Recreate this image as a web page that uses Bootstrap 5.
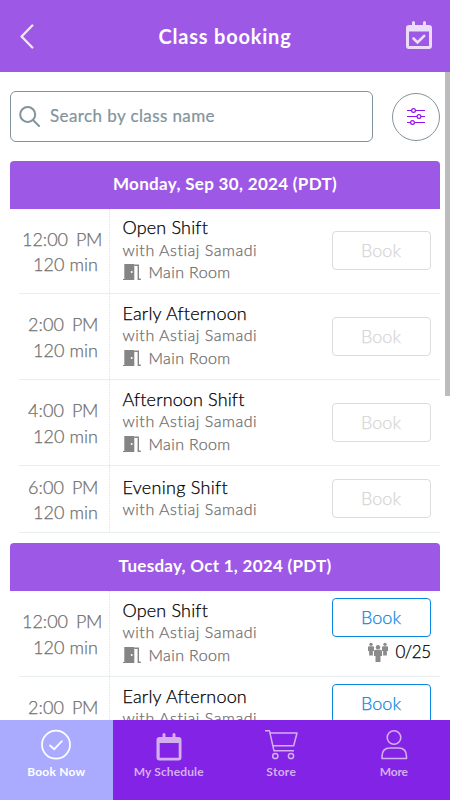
<!DOCTYPE html>
<html lang="en">
<head>
<meta charset="utf-8">
<meta name="viewport" content="width=device-width, initial-scale=1">
<title>Class booking</title>
<link href="https://cdn.jsdelivr.net/npm/bootstrap@5.3.0/dist/css/bootstrap.min.css" rel="stylesheet">
<style>
body{font-family:Lato,"Open Sans",sans-serif;height:800px;background:#fff;color:#111}
.app-head{height:72px;background:#9d59e6;color:#fff;padding:0 18px 0 20px}
.app-title{font-size:20px;font-weight:700;line-height:24px;margin-left:10px}
.page-body{padding:19px 10px 0}
.search-row{margin-bottom:19px}
.search-box{width:363px;height:51px;border:1px solid #82939c;border-radius:6px;padding-left:8px;color:#82939c}
.search-box input{border:0;outline:0;font-size:17px;letter-spacing:.4px;padding:0 0 1px;width:300px;margin-left:10px;line-height:22px;background:none}
.search-box input::placeholder{color:#82939c;opacity:1;-webkit-text-stroke:.2px #82939c}
.filter-btn{width:48px;height:48px;border:1px solid #82939c;border-radius:50%;background:#fff}
.day{margin-bottom:10.5px}
.day-head{height:47.5px;background:#9d59e6;color:#fff;border-radius:4px 4px 0 0;font-size:17px;font-weight:700;padding-bottom:2px}
.slot{height:86px;margin-left:9px;border-bottom:1px solid #e9eef0;-webkit-text-stroke:.25px currentColor}
.slot-first{height:85px}
.slot-short{height:67px}
.slot-time{width:91px;border-right:1px dotted #dfe3e5;color:#707070;font-size:18px;font-weight:300;line-height:25.5px;padding-top:3px}
.slot-time .time-line{padding-right:11px}
.slot-time .time-line.wide{padding-right:7px}
.slot-info{padding:0 0 1px 12.5px;line-height:22.4px;font-weight:300}
.slot-name{font-size:18px;color:#000}
.slot-sub{font-size:16px;color:#6c6c6c}
.slot-action{padding-right:9.500px}
.slot-action.open{padding-top:7px}
.btn-book{width:99px;height:39px;font-size:18px;font-weight:300;border-radius:4px;padding:0;color:#0b87e3;border:1px solid #0b87e3;background:#fff}
.btn-book:disabled{color:#d6d6d6;border-color:#dcdcdc;opacity:1}
.seat-count{font-size:17px;line-height:24px;color:#000;margin-top:3px;font-weight:300}
.scroll-thumb{width:5px;height:324px;top:72px;right:0;background:#bcbcbc}
.tab-bar{height:80px;background:#8323e6}
.tab-item{width:112.5px;color:#d3afee;font-size:12px;font-weight:700;text-decoration:none;padding-top:8px;line-height:16px}
.tab-item.selected{background:#aaabff;color:#fff}
.tab-item svg{height:34px;width:36px;margin-bottom:2px}
</style>
<script src="https://cdn.jsdelivr.net/npm/bootstrap@5.3.0/dist/js/bootstrap.bundle.min.js"></script>
</head>
<body class="overflow-hidden">
<svg class="d-none">
<symbol id="door" viewBox="0 0 18 16"><path d="M1.300 0H11.300V16H0V15h1.300z" fill="#858585"/><path d="M11.300 1.200H15.300V15.300H17.800" fill="none" stroke="#858585" stroke-width="1.400"/><circle cx="8.700" cy="8" r="1" fill="#fff"/></symbol>
<symbol id="person" viewBox="0 0 8 17"><circle cx="4" cy="2.200" r="2.200"/><path d="M1.500 4.800h5Q8 4.800 8 6.300V11H6.500v6h-5v-6H0V6.300Q0 4.800 1.500 4.800z"/></symbol>
</svg>
<div class="vh-100 d-flex flex-column overflow-hidden">
<header class="app-head d-flex align-items-center justify-content-between flex-shrink-0">
<svg width="14" height="25" viewBox="0 0 14 25" fill="none" stroke="#f3e3fc" stroke-width="2.400" stroke-linecap="round" stroke-linejoin="round"><path d="M12.300 1.500 1.600 12.500 12.300 23.500"/></svg>
<div class="app-title"><span data-w="133">Class booking</span></div>
<svg width="26" height="30" viewBox="0 0 26 30"><path fill="#ebdcfa" fill-rule="evenodd" d="M6 1.500a1.500 1.500 0 0 1 3 0v2.500h8V1.500a1.500 1.500 0 0 1 3 0v2.500h3a3 3 0 0 1 3 3V25a3 3 0 0 1-3 3H3a3 3 0 0 1-3-3V7a3 3 0 0 1 3-3h3zM3 10.500V25h20V10.500z"/><path d="m7.500 17.500 4 4 6.700-6.700" fill="none" stroke="#ebdcfa" stroke-width="2.600" stroke-linecap="round"/></svg>
</header>
<main class="page-body flex-grow-1 overflow-hidden">
<div class="search-row d-flex justify-content-between align-items-center">
<label class="search-box d-flex align-items-center">
<svg width="21" height="21" viewBox="0 0 21 21" fill="none" stroke="#82939c" stroke-width="2"><circle cx="8.700" cy="8.500" r="7.500"/><path d="m14 14 6 6" stroke-linecap="round"/></svg>
<input type="text" placeholder="Search by class name">
</label>
<button class="filter-btn d-flex align-items-center justify-content-center p-0" aria-label="Filter">
<svg width="18" height="17" viewBox="0 0 18 17" fill="#fff" stroke="#9012ec" stroke-width="1.200"><path d="M0 2.500h18M0 8.500h18M0 14.500h18"/><circle cx="6.500" cy="2.500" r="1.900"/><circle cx="12" cy="8.500" r="1.900"/><circle cx="5.500" cy="14.500" r="1.900"/></svg>
</button>
</div>
<div id="schedule"></div>
</main>
<nav class="tab-bar d-flex flex-shrink-0">
<a href="#" class="tab-item selected d-flex flex-column align-items-center"><svg viewBox="0 0 36 34" fill="none" stroke="#fff" stroke-width="1.700" stroke-linecap="round"><circle cx="18" cy="16.700" r="14"/><path d="m12 17.500 4.200 3.700 7.700-8"/></svg><span data-w="58">Book Now</span></a>
<a href="#" class="tab-item d-flex flex-column align-items-center"><svg viewBox="0 0 36 34"><path fill="#d3afee" fill-rule="evenodd" d="M11.500 6.500a1.500 1.500 0 0 1 3 0V9h7V6.500a1.500 1.500 0 0 1 3 0V9h3a3 3 0 0 1 3 3v17.500a3 3 0 0 1-3 3h-19a3 3 0 0 1-3-3V12a3 3 0 0 1 3-3h3zM8.700 15v14.700h19V15z"/></svg><span data-w="70">My Schedule</span></a>
<a href="#" class="tab-item d-flex flex-column align-items-center"><svg viewBox="0 0 36 34" fill="none" stroke="#d3afee" stroke-width="1.500" stroke-linejoin="round"><path d="M2 2.800h4.500l4.500 20h20M7 5h27l-3.300 12.700H10"/><circle cx="12.300" cy="28" r="2.600"/><circle cx="28" cy="28" r="2.600"/></svg><span data-w="30">Store</span></a>
<a href="#" class="tab-item d-flex flex-column align-items-center"><svg viewBox="0 0 36 34" fill="none" stroke="#d3afee" stroke-width="1.600" stroke-linejoin="round"><circle cx="18" cy="9.500" r="6.800"/><path d="M6 30.500v-2Q6 20 14 20h8.500Q30.500 20 30.500 28.500v2z"/></svg><span data-w="28">More</span></a>
</nav>
</div>
<div class="scroll-thumb position-absolute"></div>
<script>
const days=[
 {date:"Monday, Sep 30, 2024 (PDT)",slots:[
  {t:"12:00",name:"Open Shift",room:true,cls:"slot-first"},
  {t:"2:00",name:"Early Afternoon",room:true},
  {t:"4:00",name:"Afternoon Shift",room:true},
  {t:"6:00",name:"Evening Shift",cls:"slot-short"}]},
 {date:"Tuesday, Oct 1, 2024 (PDT)",open:true,slots:[
  {t:"12:00",name:"Open Shift",room:true},
  {t:"2:00",name:"Early Afternoon",room:true}]}
];
const nameWidths={"Open Shift":85,"Early Afternoon":124,"Afternoon Shift":121,"Evening Shift":105};
document.getElementById("schedule").innerHTML=days.map(d=>`
<section class="day"><div class="day-head d-flex align-items-center justify-content-center"><span data-w="${d.open?213:224}">${d.date}</span></div>
${d.slots.map(s=>`<div class="slot ${s.cls||""} d-flex align-items-stretch">
<div class="slot-time flex-shrink-0 d-flex flex-column justify-content-center">
<div class="time-line ${s.t.length>4?"wide":""} d-flex justify-content-end"><span class="me-2" data-w="${s.t.length>4?46:36}">${s.t}</span><span data-w="26">PM</span></div>
<div class="time-line text-end"><span data-w="65">120 min</span></div></div>
<div class="slot-info flex-grow-1 d-flex flex-column justify-content-center">
<div class="slot-name"><span data-w="${nameWidths[s.name]}">${s.name}</span></div>
<div class="slot-sub"><span data-w="135">with Astiaj Samadi</span></div>
${s.room?`<div class="slot-sub d-flex align-items-center"><svg width="18" height="16" class="me-2"><use href="#door"/></svg><span data-w="82">Main Room</span></div>`:""}</div>
<div class="slot-action ${d.open?"open":"justify-content-center"} d-flex flex-column align-items-end"><button class="btn btn-book" ${d.open?"":"disabled"}><span data-w="40">Book</span></button>
${d.open?`<div class="seat-count d-flex align-items-center"><svg width="20" height="20" class="me-2" fill="#8b8b8b" stroke="none"><use href="#person" x="0" y="0" width="6" height="14"/><use href="#person" x="14" y="0" width="6" height="14"/><use href="#person" x="6" y="3" width="8" height="17"/></svg><span data-w="35">0/25</span></div>`:""}</div>
</div>`).join("")}</section>`).join("");
/* Even out tracking so labels keep a steady width */
document.querySelectorAll("[data-w]").forEach(e=>{
 const w=e.getBoundingClientRect().width;
 e.style.letterSpacing=(e.dataset.w-w)/e.textContent.length+"px";
});
</script>
</body>
</html>
